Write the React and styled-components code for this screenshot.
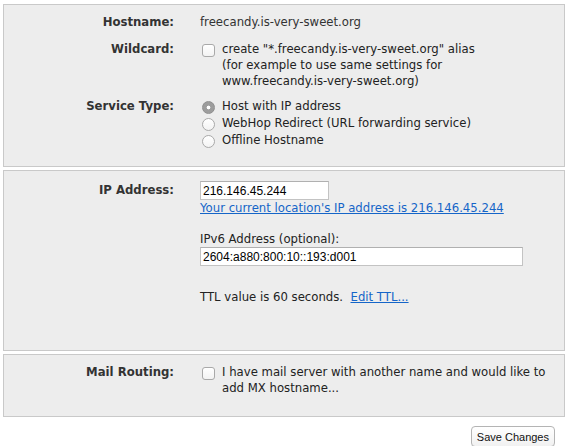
import React from "react";
import styled, { createGlobalStyle } from "styled-components";

const GlobalStyle = createGlobalStyle`
  html, body {
    margin: 0;
    padding: 0;
    background: #ffffff;
  }
  body {
    font-family: "DejaVu Sans", "Liberation Sans", sans-serif;
    font-size: 11.7px;
    color: #222;
  }
`;

const Page = styled.div`
  padding: 4px 3px 0 3px;
  display: flex;
  flex-direction: column;
  gap: 3px;
`;

const Panel = styled.div`
  background: #ededed;
  border: 1px solid #c9c9c9;
  display: grid;
  grid-template-columns: 170px 1fr;
  column-gap: 26px;
  row-gap: ${(p) => p.$gap || 0}px;
  align-content: start;
  padding: ${(p) => p.$pad || "8px 0 8px 0"};
  height: ${(p) => p.$h}px;
  box-sizing: border-box;
`;

const Label = styled.div`
  font-weight: bold;
  text-align: right;
  line-height: 16px;
  color: #333;
  padding-top: ${(p) => p.$top || 0}px;
`;

const Value = styled.div`
  line-height: 16px;
  color: #333;
  padding-right: 20px;
  margin-bottom: ${(p) => p.$mb || 0}px;
`;

const OptionRow = styled.label`
  display: flex;
  align-items: flex-start;
  gap: 7px;
  line-height: ${(p) => p.$lh || 16}px;
`;

const Box = styled.span`
  flex: none;
  width: 11px;
  height: 11px;
  margin-top: 3px;
  margin-left: 2px;
  border: 1px solid #a9a9a9;
  border-radius: 3px;
  background: linear-gradient(#ffffff, #f3f3f3);
  box-shadow: inset 0 1px 0 #fff;
`;

const Radio = styled.span`
  flex: none;
  width: 11px;
  height: 11px;
  margin-top: 3px;
  margin-left: 2px;
  border: 1px solid ${(p) => (p.$on ? "#8f8f8f" : "#a9a9a9")};
  border-radius: 50%;
  background: ${(p) =>
    p.$on
      ? "radial-gradient(circle, #ffffff 0 1.6px, #9d9d9d 2.2px)"
      : "linear-gradient(#ffffff, #f3f3f3)"};
`;

const Stack = styled.div`
  display: flex;
  flex-direction: column;
`;

const TextInput = styled.input`
  font-family: "Liberation Sans", Arial, sans-serif;
  font-size: 12px;
  color: #000;
  height: 19px;
  box-sizing: border-box;
  width: ${(p) => p.$w}px;
  padding: 1px 2px;
  border: 1px solid #c3c3c3;
  border-top-color: #b0b0b0;
  background: #fff;
  outline: none;
  margin: 0;
`;

const Link = styled.a`
  color: #1565c8;
  text-decoration: underline;
  cursor: pointer;
`;

const SubLabel = styled.div`
  margin-top: ${(p) => p.$mt || 0}px;
  margin-bottom: ${(p) => p.$mb || 0}px;
  line-height: 16px;
`;

const Footer = styled.div`
  display: flex;
  justify-content: flex-end;
  padding: 6px 10px 0 0;
`;

const Button = styled.button`
  font-family: "Liberation Sans", Arial, sans-serif;
  font-size: 11px;
  color: #111;
  height: 21px;
  padding: 0 5px;
  border: 1px solid #b4b4b4;
  border-radius: 4px;
  background: linear-gradient(#ffffff, #f1f1f1);
  box-shadow: 0 1px 0 rgba(0, 0, 0, 0.06);
`;

export default function App() {
  return (
    <>
      <GlobalStyle />
      <Page>
        <Panel $gap={9} $pad="9px 0 0 0" $h={163}>
          <Label>Hostname:</Label>
          <Value $mb={2}>freecandy.is-very-sweet.org</Value>

          <Label>Wildcard:</Label>
          <OptionRow>
            <Box />
            <span>
              create "*.freecandy.is-very-sweet.org" alias
              <br />
              (for example to use same settings for
              <br />
              www.freecandy.is-very-sweet.org)
            </span>
          </OptionRow>

          <Label>Service Type:</Label>
          <Stack>
            <OptionRow $lh={17}>
              <Radio $on />
              <span>Host with IP address</span>
            </OptionRow>
            <OptionRow $lh={17}>
              <Radio />
              <span>WebHop Redirect (URL forwarding service)</span>
            </OptionRow>
            <OptionRow $lh={17}>
              <Radio />
              <span>Offline Hostname</span>
            </OptionRow>
          </Stack>
        </Panel>

        <Panel $pad="10px 0 0 0" $h={181}>
          <Label $top={1}>IP Address:</Label>
          <Stack>
            <TextInput $w={129} defaultValue="216.146.45.244" />
            <Value>
              <Link>Your current location's IP address is 216.146.45.244</Link>
            </Value>
            <SubLabel $mt={15}>IPv6 Address (optional):</SubLabel>
            <TextInput $w={323} defaultValue="2604:a880:800:10::193:d001" />
            <SubLabel $mt={23}>
              TTL value is 60 seconds.&nbsp; <Link>Edit TTL...</Link>
            </SubLabel>
          </Stack>
        </Panel>

        <Panel $pad="9px 0 0 0" $h={63}>
          <Label>Mail Routing:</Label>
          <OptionRow>
            <Box />
            <span>
              I have mail server with another name and would like to
              <br />
              add MX hostname...
            </span>
          </OptionRow>
        </Panel>

        <Footer>
          <Button>Save Changes</Button>
        </Footer>
      </Page>
    </>
  );
}
